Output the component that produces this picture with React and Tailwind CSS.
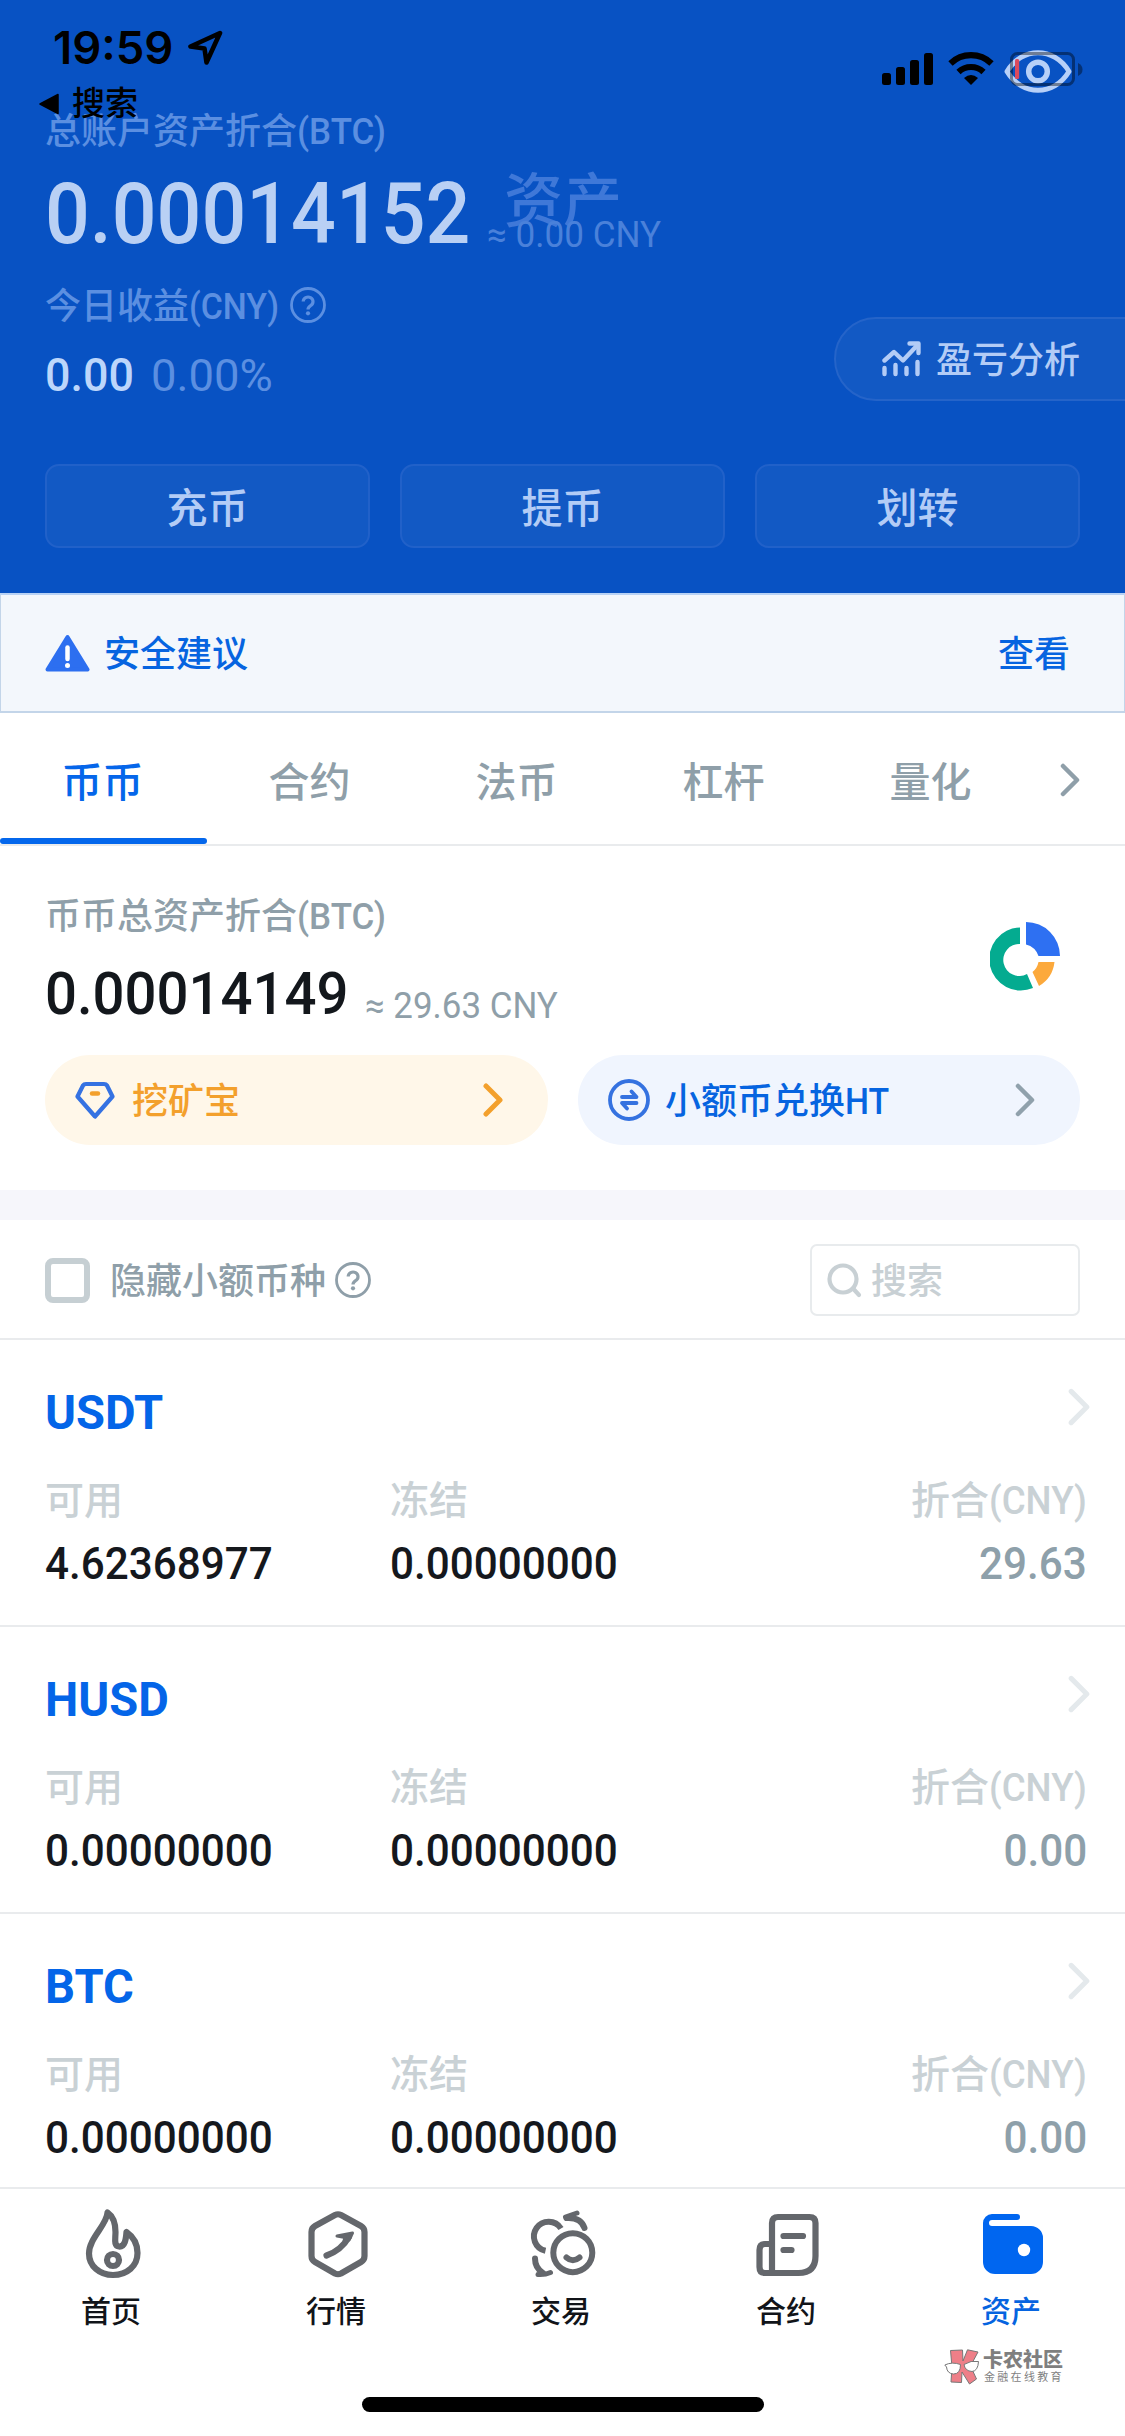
const Chevron = ({ className, w = 5 }) => (
  <svg className={className} viewBox="0 0 20 34" fill="none" stroke="currentColor" strokeWidth={w} strokeLinecap="round" strokeLinejoin="round">
    <path d="M3 3 L17 17 L3 31" />
  </svg>
);

const Help = ({ className }) => (
  <svg className={className} viewBox="0 0 36 36" fill="none" stroke="currentColor" strokeWidth="2.8">
    <circle cx="18" cy="18" r="16.5" />
    <path d="M13.2 14.6 a4.9 4.6 0 1 1 7.4 4 c-1.8 1.2 -2.6 1.9 -2.6 4" strokeWidth="3.2" />
    <circle cx="18" cy="26.3" r="2.1" fill="currentColor" stroke="none" />
  </svg>
);

/* Latin text, scaled horizontally towards a DIN look */
const L = ({ children, className = "origin-left scale-x-[.94]" }) => (
  <span className={"inline-block whitespace-pre " + className}>{children}</span>
);

function Status() {
  return (
    <div className="h-[120px] flex justify-between relative z-10 text-black">
      <div className="pl-[39px] pt-[20px]">
        <div className="flex items-center h-[56px] pl-[14px]">
          <span className="w-[134px] font-[Inter] font-semibold text-[45px] leading-[56px] whitespace-nowrap"><L className="origin-left scale-x-[1.01]">19:59</L></span>
          <svg className="w-[36px] h-[36px]" viewBox="0 0 36 36" fill="none" stroke="currentColor" strokeWidth="4.6" strokeLinejoin="round">
            <path d="M33 3 L3.5 16.5 L17.5 18.5 L19.5 32.5 Z" />
          </svg>
        </div>
        <div className="flex items-center h-[55px] font-medium text-[33px] leading-[55px]">
          <svg className="w-[20px] h-[22px] mr-[13px]" viewBox="0 0 20 22"><path d="M1 11 L19 1.5 V20.5 Z" fill="#000" stroke="#000" strokeWidth="1.5" strokeLinejoin="round" /></svg>
          搜索
        </div>
      </div>
      <svg className="w-[205px] h-[50px] mt-[47px] mr-[40px]" viewBox="880 47 205 50" fill="none">
        <g fill="#000">
          <rect x="882" y="73" width="9" height="12" rx="2.5" />
          <rect x="896" y="67" width="9" height="18" rx="2.5" />
          <rect x="910" y="60" width="9" height="25" rx="2.5" />
          <rect x="924" y="53" width="9" height="32" rx="2.5" />
          <path d="M971 85 L964 78 Q971 72 978 78 Z" />
        </g>
        <path d="M950.500 63.500 A29.500 29.500 0 0 1 991.500 63.500" stroke="#000" strokeWidth="6.200" />
        <path d="M958.500 72 A18 18 0 0 1 983.500 72" stroke="#000" strokeWidth="6" />
        <path d="M1007 71.500 C1022 46.500 1054 46.500 1069 71.500 C1054 96.500 1022 96.500 1007 71.500 Z" stroke="#b7d0f8" strokeWidth="5" strokeLinejoin="round" />
        <circle cx="1038" cy="71.500" r="9.300" stroke="#b7d0f8" strokeWidth="5.500" />
        <rect x="1011.500" y="53.500" width="62" height="31" rx="6" stroke="#000" strokeOpacity=".4" strokeWidth="3" />
        <path d="M1078 63 q4.500 2 4.500 6.500 t-4.500 6.500 Z" fill="#000" fillOpacity=".4" />
        <rect x="1015" y="59" width="4.200" height="20" rx="1.500" fill="#dc4a5c" />
      </svg>
    </div>
  );
}

function Header() {
  return (
    <div className="relative h-[593px] bg-[#0852c3] text-[#5b8fe1] font-medium">
      <Status />
      <div className="absolute left-[504px] top-[160px] text-[59px] leading-[84px] font-medium text-[#3f78d8]">资产</div>
      <div className="pl-[45px] -mt-[13px]">
        <div className="text-[36px] leading-[50px] flex">总账户资产折合<L className="origin-left scale-x-[.97]">(BTC)</L></div>
        <div className="flex h-[110px] mt-[6px]">
          <div className="w-[442px] text-[#b9d0f4] text-[85px] leading-[102px]"><L className="origin-left scale-x-[.928]">0.00014152</L></div>
          <div className="pt-[50px] text-[36px] leading-[44px] font-normal"><L className="origin-left scale-x-[.975] text-[#4a81da]">≈ 0.00 CNY</L></div>
        </div>
        <div className="flex items-center h-[50px] mt-[7px] text-[36px] leading-[50px]">
          <span className="w-[245px] flex pt-[3px]">今日收益<L className="origin-left scale-x-[.94]">(CNY)</L></span>
          <Help className="w-[36px] h-[36px]" />
        </div>
        <div className="flex items-baseline mt-[17px] h-[56px] leading-[56px]">
          <span className="w-[106px] text-[46px] text-[#bcd6fb]"><L className="origin-left scale-x-[.975]">0.00</L></span>
          <span className="text-[45px] font-normal"><L className="origin-left scale-x-[1.01]">0.00%</L></span>
        </div>
      </div>
      <div className="absolute right-[-2px] top-[317px] w-[293px] h-[84px] rounded-l-full border-2 border-[#2564c9] bg-[#1259c4] flex items-center pl-[46px] pt-[4px] text-[#b3ccf6] text-[36px]">
        <svg className="w-[39px] h-[36px] mr-[15px] -mt-[4px]" viewBox="0 0 39 36" fill="none" stroke="currentColor" strokeWidth="4.400" strokeLinecap="round" strokeLinejoin="round">
          <path d="M2.500 19.500 L12 11 L21 19.500 L35.500 4" />
          <path d="M27.500 2.500 H36.500 V12" />
          <path d="M2.500 27 V33 M13.500 24 V33 M24.500 27 V33 M35.500 21 V33" />
        </svg>
        盈亏分析
      </div>
      <div className="absolute left-[45px] right-[45px] top-[464px] grid grid-cols-3 gap-[30px] text-[#b3ccf6] text-[41px]">
        {["充币", "提币", "划转"].map((t) => (
          <div key={t} className="h-[84px] rounded-[14px] border-2 border-[#2161c9] bg-[#1259c4] flex items-center justify-center pt-[8px]">{t}</div>
        ))}
      </div>
    </div>
  );
}

const coins = [
  ["USDT", "4.62368977", "29.63"],
  ["HUSD", "0.00000000", "0.00"],
  ["BTC", "0.00000000", "0.00"],
];

function Coin({ name, avail, cny }) {
  return (
    <div className="h-[287px] border-b-2 border-[#e9ebed] pl-[45px] pr-[38px] pt-[41px]">
      <div className="flex justify-between h-[64px]">
        <L className="origin-left scale-x-[.98] text-[48px] leading-[64px] font-bold text-[#0465e8]">{name}</L>
        <Chevron className="w-[24px] h-[38px] mt-[7px] -mr-[4px] text-[#e4e9ec]" w={4.500} />
      </div>
      <div className="flex text-[39px] leading-[56px] mt-[28px] text-[#c9d1d5] font-medium whitespace-nowrap">
        <span className="w-[345px]">可用</span>
        <span>冻结</span>
        <span className="ml-auto w-[176px] flex font-medium">折合<L className="origin-left scale-x-[.94]">(CNY)</L></span>
      </div>
      <div className="flex text-[45px] leading-[56px] mt-[7px] text-[#15181d] font-medium">
        <span className="w-[345px]"><L className="origin-left scale-x-[.938]">{avail}</L></span>
        <span><L className="origin-left scale-x-[.938]">0.00000000</L></span>
        <span className="ml-auto text-[#8ea0aa]"><L className="origin-right scale-x-[.938]">{cny}</L></span>
      </div>
    </div>
  );
}

const Fire = () => (
  <svg className="w-[72px] h-[72px]" viewBox="0 0 72 72" fill="none" stroke="#64676c" strokeWidth="6.200" strokeLinejoin="round" strokeLinecap="round">
    <path d="M30.500 4.500 C30 17 12 30 12 45.500 C12 58 22.500 67 36 67 C50 67 60.500 58 60.500 45 C60.500 36 56 28.500 49.500 24 C49 31 48 39 42 38.500 C36.500 38 38.500 31 38.500 24 C38.500 14 35.500 8 30.500 4.500 Z" />
    <circle cx="36" cy="52" r="6" />
  </svg>
);
const Hex = () => (
  <svg className="w-[72px] h-[72px]" viewBox="0 0 72 72" fill="none" stroke="#64676c" strokeWidth="6.200" strokeLinejoin="round" strokeLinecap="round">
    <path d="M33 7 Q36 5.500 39 7 L59 18 Q62.500 20 62.500 24 V48 Q62.500 52 59 54 L39 65.500 Q36 67 33 65.500 L13 54 Q9.500 52 9.500 48 V24 Q9.500 20 13 18 Z" />
    <path d="M24.500 47.500 Q39 42.500 47 29" />
    <path d="M35 28 L50.500 25 L47 32 L42 33 L43 29.500 Z" fill="#64676c" strokeWidth="3" />
  </svg>
);
const Trade = () => (
  <svg className="w-[72px] h-[72px]" viewBox="0 0 72 72" fill="none" stroke="#64676c" strokeWidth="6" strokeLinejoin="round" strokeLinecap="round">
    <circle cx="45.800" cy="44.700" r="19.500" />
    <path d="M39.500 49.500 Q45.800 55 52.500 49.500" />
    <path d="M34 20.500 A14.700 14.700 0 1 0 18.500 42.800" strokeLinecap="butt" />
    <path d="M38.500 9 L50 5" strokeWidth="5" />
    <path d="M39.500 10 Q54 9 57.500 20" />
    <path d="M8 50.500 Q8 60 16 65" />
    <path d="M11 66.500 Q18 67 23.500 64.500" strokeWidth="5" />
  </svg>
);
const Contract = () => (
  <svg className="w-[72px] h-[72px]" viewBox="0 0 72 72" fill="none" stroke="#64676c" strokeWidth="6.200" strokeLinejoin="round" strokeLinecap="round">
    <path d="M20 65 V15 Q20 9 26 9 H57.500 Q63.500 9 63.500 15 V48 Q63.500 65 46.500 65 H13 Q7.500 65 7.500 59 V42 Q7.500 36 13 36 H19" />
    <path d="M31.500 28 H51 M31.500 42 H39.500" />
  </svg>
);
const Wallet = () => (
  <svg className="w-[72px] h-[72px]" viewBox="0 0 72 72">
    <path d="M15 6 H40 a3 3 0 0 1 0 6 H15 a3 3 0 0 0 0 6 H54 a12 12 0 0 1 12 12 V54 a12 12 0 0 1 -12 12 H18 A12 12 0 0 1 6 54 V15 A9 9 0 0 1 15 6 Z" fill="#0066f0" />
    <circle cx="47" cy="42" r="6.200" fill="#fff" />
  </svg>
);

const nav = [["首页", Fire], ["行情", Hex], ["交易", Trade], ["合约", Contract], ["资产", Wallet]];

export default function App() {
  return (
    <div className='w-[1125px] h-[2436px] overflow-hidden bg-white flex flex-col font-["Roboto","Noto_Sans_CJK_SC",sans-serif]'>
      <Header />
      <div className="h-[120px] border-2 border-x border-t-[#b8d2f5] border-[#c3d5e9] bg-[#f3f7fc] flex items-center justify-between pl-[44px] pr-[54px] text-[36px] font-medium text-[#0664e0]">
        <div className="flex items-center pt-[4px]">
          <svg className="w-[45px] h-[38px] mr-[14px] -mt-[4px]" viewBox="0 0 45 38">
            <path d="M22.500 3 L42.500 35.500 H2.500 Z" fill="#2d6ff0" stroke="#2d6ff0" strokeWidth="4" strokeLinejoin="round" />
            <path d="M22.500 13.500 V25" stroke="#fff" strokeWidth="4.500" strokeLinecap="round" />
            <circle cx="22.500" cy="31.500" r="2.500" fill="#fff" />
          </svg>
          安全建议
        </div>
        <span className="pt-[4px]">查看</span>
      </div>
      <div className="h-[133px] border-b-2 border-[#e9ebed] flex text-[41px] text-[#8f9fa9] font-medium">
        {["币币", "合约", "法币", "杠杆", "量化"].map((t, i) => (
          <div key={t} className={"w-[207px] flex flex-col items-center justify-between pt-[40px] leading-[60px] " + (i === 0 ? "text-[#0566ea]" : "")}>
            <span className="pr-[2px]">{t}</span>
            {i === 0 && <div className="w-full h-[6px] rounded-full bg-[#0467ec]" />}
          </div>
        ))}
        <Chevron className="w-[20px] h-[34px] mt-[50px] ml-[25px]" w={4.500} />
      </div>
      <div className="h-[344px] px-[45px] pt-[45px]">
        <div className="flex justify-between">
          <div>
            <div className="text-[36px] leading-[52px] text-[#8f9fa9] font-medium flex">币币总资产折合<L className="origin-left scale-x-[.97]">(BTC)</L></div>
            <div className="flex items-baseline h-[72px] mt-[15px]">
              <div className="w-[320px] text-[60px] leading-[72px] text-[#13171c] font-medium"><L className="origin-left scale-x-[.938]">0.00014149</L></div>
              <div className="text-[36px] text-[#8f9fa9] relative top-[4px]"><L className="origin-left scale-x-[.97]">≈ 29.63 CNY</L></div>
            </div>
          </div>
          <svg className="w-[72px] h-[70px] mt-[30px] mr-[18px]" viewBox="-1 0 72 70">
            <path d="M29 6.500 A31.500 31.500 0 1 0 42 67 L36 53 A16 16 0 1 1 29 23 Z" fill="#04ab90" />
            <path d="M35 1 A34 34 0 0 1 69 35 H47.500 A18 18 0 0 0 35 23.500 Z" fill="#2e70f2" />
            <path d="M47.500 41 H63.500 A32 32 0 0 1 48 65 L41.500 51 A17 17 0 0 0 47.500 41 Z" fill="#fca93c" />
          </svg>
        </div>
        <div className="flex justify-between mt-[25px] text-[36px] leading-[52px]">
          <div className="w-[503px] h-[90px] rounded-full bg-[#fff7e9] flex items-center pl-[30px] pr-[45px] text-[#f3a02c] font-medium">
            <svg className="w-[40px] h-[38px] mr-[17px]" viewBox="0 0 40 38" fill="none" strokeLinejoin="round" strokeLinecap="round">
              <path d="M11 3 H29 Q31 3 32 4.500 L37.500 15.500 L20 35.500 L2.500 15.500 L8 4.500 Q9 3 11 3 Z" stroke="#3572e2" strokeWidth="4.200" />
              <path d="M17 12.500 H23" stroke="#f3a02c" strokeWidth="4.500" />
            </svg>
            <span className="pt-[4px]">挖矿宝</span>
            <Chevron className="w-[20px] h-[34px] ml-auto" w={5} />
          </div>
          <div className="w-[502px] h-[90px] rounded-full bg-[#f0f5fe] flex items-center pl-[30px] pr-[45px] text-[#0664e0] font-medium">
            <svg className="w-[42px] h-[42px] mr-[15px]" viewBox="0 0 42 42" fill="none" stroke="#3572e0" strokeWidth="3.800" strokeLinejoin="round" strokeLinecap="round">
              <circle cx="21" cy="21" r="19" />
              <path d="M14 18 H28.500 L23.500 12.500 M28.500 24 H14 L19 29.500" />
            </svg>
            <span className="pt-[4px] flex">小额币兑换<L>HT</L></span>
            <Chevron className="w-[20px] h-[34px] ml-auto text-[#90a1ac]" w={4.500} />
          </div>
        </div>
      </div>
      <div className="h-[30px] bg-[#f6f6fb]" />
      <div className="h-[120px] border-b-2 border-[#e9ebed] flex items-center px-[45px] pt-[2px] text-[36px] leading-[52px] text-[#8f9fa9] shrink-0">
        <div className="w-[45px] h-[45px] rounded-[8px] border-[6px] border-[#c6cfd3] mr-[20px]" />
        <span className="w-[225px] pt-[4px] font-medium">隐藏小额币种</span>
        <Help className="w-[36px] h-[36px]" />
        <div className="ml-auto w-[270px] h-[72px] rounded-[7px] border-2 border-[#e8ebed] flex items-center pl-[15px] text-[#c8d0d4] font-medium">
          <svg className="w-[36px] h-[36px] mr-[8px]" viewBox="0 0 36 36" fill="none" stroke="currentColor" strokeWidth="4.200" strokeLinecap="round">
            <circle cx="16" cy="17" r="13.500" />
            <path d="M26.500 27 L32 33" />
          </svg>
          <span className="pt-[4px]">搜索</span>
        </div>
      </div>
      <div className="h-[847px] overflow-hidden shrink-0">
        {coins.map(([n, a, c]) => <Coin key={n} name={n} avail={a} cny={c} />)}
      </div>
      <div className="relative h-[249px] border-t-2 border-[#e9ebed] bg-white shrink-0">
        <div className="grid grid-cols-5 pt-[19px]">
          {nav.map(([t, Icon], i) => (
            <div key={t} className={"flex flex-col items-center text-[30px] leading-[44px] font-medium " + (i === 4 ? "text-[#0664e0]" : "text-[#111419]")}>
              <Icon />
              <span className="mt-[10px] pr-[3px]">{t}</span>
            </div>
          ))}
        </div>
        <div className="absolute left-[362px] top-[208px] w-[402px] h-[15px] rounded-full bg-black" />
        <div className="absolute left-[944px] top-[160px] flex items-center">
          <svg className="w-[36px] h-[36px] mr-[3px]" viewBox="0 0 36 36" stroke="#777" strokeWidth="1" strokeLinejoin="round">
            <path d="M6.500 1.500 L18.500 1 L19 12 L23.500 .8 L34 3 L26.500 17 L32.500 30 L25.500 35 L18 23 L17.500 33.500 L7 33 L8 18 Z" fill="#ee7f88" />
            <path d="M.8 16 Q8 12.500 16.500 15.500 Q16.500 25 9.500 25 Q3 24.500 2.500 18 Z M20 15.500 Q27 11 34.500 12.500 Q34 22 28 22.500 Q21 22 20 15.500 Z" fill="#fff" />
          </svg>
          <div className="text-[#7f7f7f]">
            <div className="text-[20px] leading-[22px] font-black">卡农社区</div>
            <div className="text-[11px] leading-[14px] tracking-[2.300px] pl-[1px] whitespace-nowrap">金融在线教育</div>
          </div>
        </div>
      </div>
    </div>
  );
}
